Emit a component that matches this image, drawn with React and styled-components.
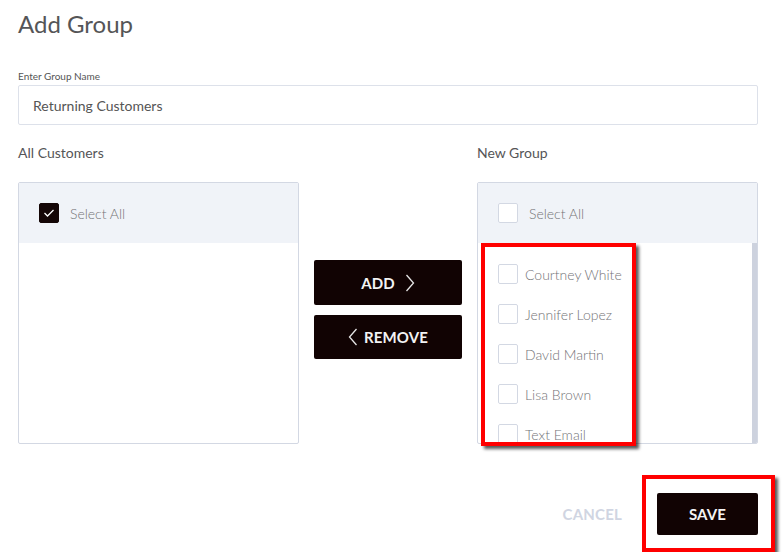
import React from "react";
import styled, { createGlobalStyle } from "styled-components";

const Global = createGlobalStyle`
  html, body { margin: 0; padding: 0; background: #fff; }
  body { font-family: Lato, "Open Sans", Arial, sans-serif; }
  * { box-sizing: border-box; }
`;

const Page = styled.div`
  width: 784px;
  height: 552px;
  padding: 10px 26px 0 18px;
  overflow: hidden;
`;

const Title = styled.h1`
  margin: 0;
  font-size: 24px;
  line-height: 28px;
  font-weight: 400;
  color: #555557;
`;

const FieldLabel = styled.label`
  display: block;
  margin-top: 32px;
  font-size: 10px;
  line-height: 12px;
  color: #555;
`;

const Input = styled.input`
  display: block;
  margin-top: 3px;
  width: 740px;
  height: 40px;
  border: 1px solid #dde1ea;
  border-radius: 2px;
  padding: 0 14px;
  font-family: Lato, Arial, sans-serif;
  font-size: 14px;
  color: #555;
  outline: none;
`;

const Columns = styled.div`
  display: grid;
  grid-template-columns: 281px 148px 281px;
  column-gap: 15px;
  margin-top: 19px;
  width: 740px;
`;

const Column = styled.div`
  display: flex;
  flex-direction: column;
`;

const ColumnLabel = styled.div`
  font-size: 14px;
  line-height: 17px;
  color: #555557;
  height: 17px;
  margin-bottom: 21px;
`;

const PanelWrap = styled.div`
  position: relative;
`;

const Panel = styled.div`
  height: 262px;
  border: 1px solid #d3d8e3;
  border-radius: 2px;
  display: flex;
  flex-direction: column;
  overflow: hidden;
  background: #fff;
`;

const PanelHeader = styled.div`
  height: 60px;
  flex: none;
  background: #f0f3f8;
  display: flex;
  align-items: center;
  padding-left: 20px;
`;

const List = styled.div`
  position: relative;
  flex: 1;
  overflow: hidden;
  padding-top: 11px;
`;

const ScrollThumb = styled.div`
  position: absolute;
  right: 0;
  top: 0;
  bottom: 0;
  width: 5px;
  background: #cdd2de;
`;

const Row = styled.div`
  height: 40px;
  display: flex;
  align-items: center;
  padding-left: 20px;
`;

const Box = styled.span`
  width: 20px;
  height: 20px;
  flex: none;
  border-radius: 2px;
  border: 1px solid ${(p) => (p.$checked ? "#140606" : "#d3d8e3")};
  background: ${(p) => (p.$checked ? "#140606" : "#fff")};
  display: flex;
  align-items: center;
  justify-content: center;
`;

const ItemText = styled.span`
  margin-left: ${(p) => p.$gap || 11}px;
  font-size: 14px;
  font-weight: 300;
  color: #747477;
  white-space: nowrap;
`;

const Highlight = styled.div`
  position: absolute;
  border: 4px solid #ff0000;
  box-shadow: 3px 3px 3px rgba(0, 0, 0, 0.65);
  pointer-events: none;
`;

const ListHighlight = styled(Highlight)`
  left: 4px;
  top: 61px;
  width: 155px;
  height: 203px;
`;

const Actions = styled.div`
  display: flex;
  flex-direction: column;
  gap: 10px;
  padding-top: 116px;
`;

const DarkButton = styled.button`
  height: ${(p) => p.$h || 45}px;
  width: ${(p) => p.$w || 148}px;
  border: none;
  border-radius: 2px;
  background: #110303;
  color: #f3f3f3;
  font-family: Lato, Arial, sans-serif;
  font-weight: 700;
  font-size: 15px;
  letter-spacing: 0.1px;
  display: flex;
  align-items: center;
  justify-content: center;
  gap: ${(p) => p.$gap || 0}px;
  padding: 0;
`;

const Footer = styled.div`
  display: flex;
  justify-content: flex-end;
  align-items: center;
  width: 740px;
  margin-top: 49px;
  gap: 35px;
`;

const Cancel = styled.span`
  font-size: 15px;
  font-weight: 700;
  color: #d0d5e2;
  letter-spacing: 0.2px;
`;

const SaveWrap = styled.div`
  position: relative;
`;

const SaveHighlight = styled(Highlight)`
  left: -15px;
  top: -18px;
  right: -17px;
  bottom: -17px;
`;

const Check = () => (
  <svg width="12" height="10" viewBox="0 0 12 10">
    <polyline points="1.5,5 4.5,8 10.5,2" fill="none" stroke="#fff" strokeWidth="1.3" />
  </svg>
);

const Chevron = ({ dir }) => (
  <svg width="10" height="18" viewBox="0 0 10 18">
    <polyline
      points={dir === "right" ? "1.5,1 8.5,9 1.5,17" : "8.5,1 1.5,9 8.5,17"}
      fill="none"
      stroke="#e6e6e6"
      strokeWidth="1.3"
    />
  </svg>
);

const customers = ["Courtney White", "Jennifer Lopez", "David Martin", "Lisa Brown", "Text Email"];

export default function App() {
  return (
    <Page>
      <Global />
      <Title>Add Group</Title>
      <FieldLabel>Enter Group Name</FieldLabel>
      <Input defaultValue="Returning Customers" />
      <Columns>
        <Column>
          <ColumnLabel>All Customers</ColumnLabel>
          <PanelWrap>
            <Panel>
              <PanelHeader>
                <Box $checked>
                  <Check />
                </Box>
                <ItemText>Select All</ItemText>
              </PanelHeader>
            </Panel>
          </PanelWrap>
        </Column>
        <Actions>
          <DarkButton $gap={10}>
            ADD <Chevron dir="right" />
          </DarkButton>
          <DarkButton $h={44} $gap={6}>
            <Chevron dir="left" /> REMOVE
          </DarkButton>
        </Actions>
        <Column>
          <ColumnLabel>New Group</ColumnLabel>
          <PanelWrap>
            <Panel>
              <PanelHeader>
                <Box />
                <ItemText>Select All</ItemText>
              </PanelHeader>
              <List>
                {customers.map((c) => (
                  <Row key={c}>
                    <Box />
                    <ItemText $gap={7}>{c}</ItemText>
                  </Row>
                ))}
                <ScrollThumb />
              </List>
            </Panel>
            <ListHighlight />
          </PanelWrap>
        </Column>
      </Columns>
      <Footer>
        <Cancel>CANCEL</Cancel>
        <SaveWrap>
          <DarkButton $w={101} $h={42}>SAVE</DarkButton>
          <SaveHighlight />
        </SaveWrap>
      </Footer>
    </Page>
  );
}
